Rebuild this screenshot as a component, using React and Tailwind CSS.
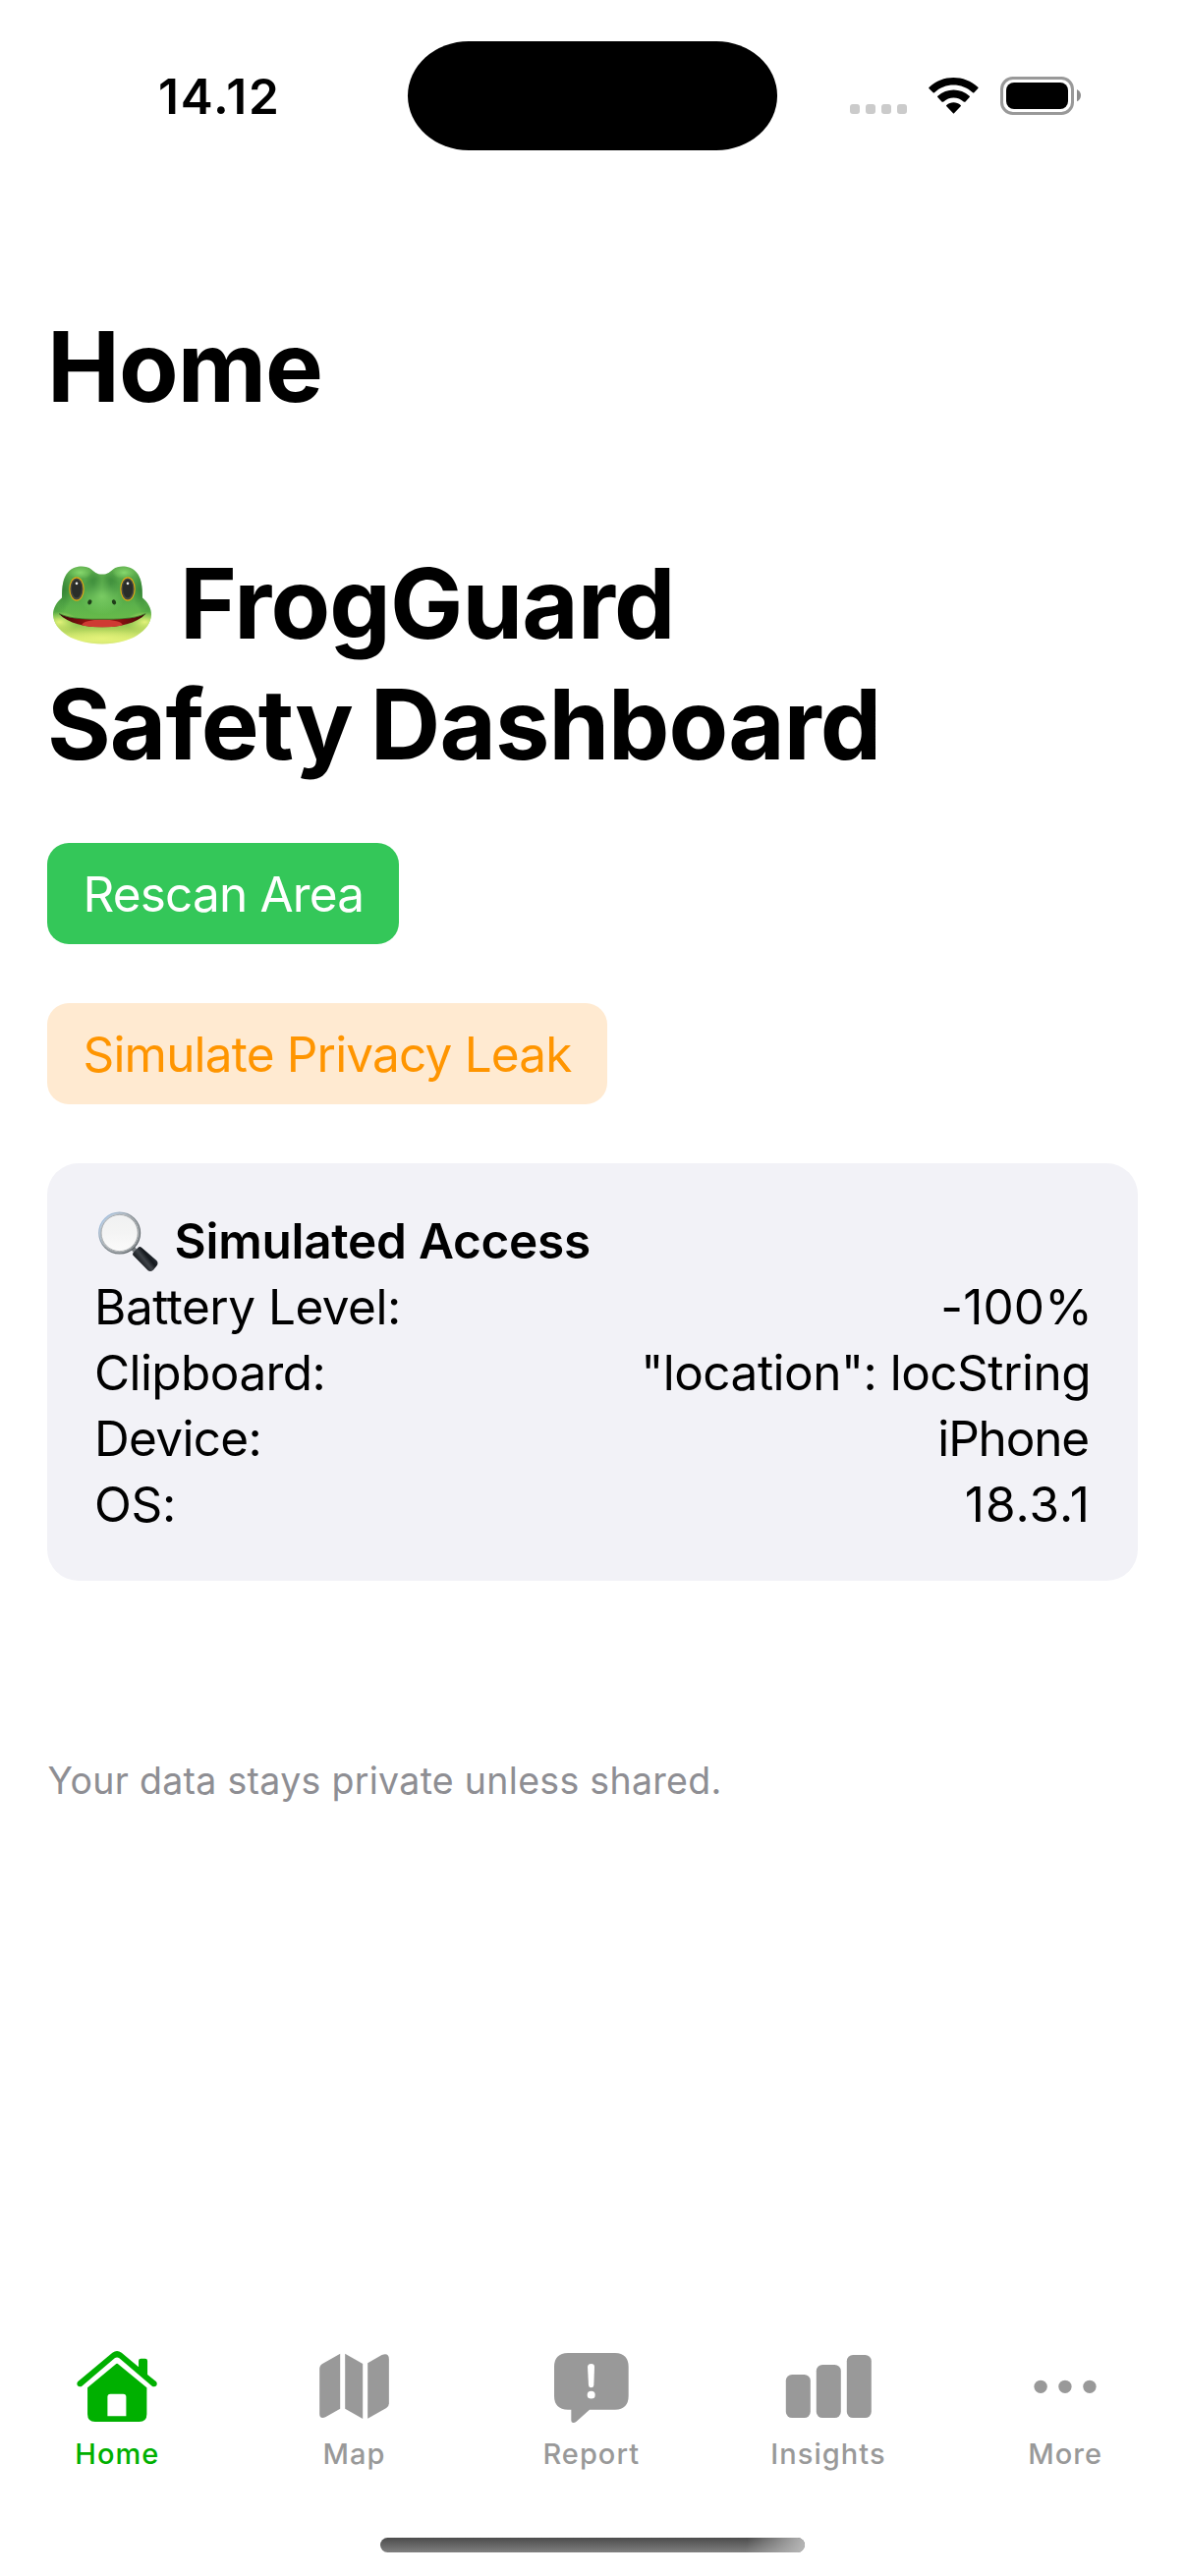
import React from "react";

function SignalDots() {
  return (
    <svg viewBox="135 84 174 120" className="mt-[2px] h-[40px] w-[58px]" fill="#cbcbcb" aria-hidden="true">
      <rect x="135" y="168" width="30" height="30" rx="9" />
      <rect x="183" y="168" width="30" height="30" rx="9" />
      <rect x="231" y="168" width="30" height="30" rx="9" />
      <rect x="279" y="168" width="30" height="30" rx="9" />
    </svg>
  );
}

function WifiIcon() {
  return (
    <svg viewBox="372 84 156 120" className="mt-[2px] ml-[21px] h-[40px] w-[52px]" aria-hidden="true">
      <path d="M376 120 Q375 118 377 116 C418 77 484 77 526 116 Q528 118 526 120 L514 133 Q512 134 510 133 C476 102 426 102 393 133 Q391 134 389 133 Z" />
      <path d="M403 147 Q401 145 403 143 C431 118 472 118 500 143 Q502 145 500 147 L487 161 Q485 162 483 161 C465 144 438 144 420 161 Q418 162 416 161 Z" />
      <path d="M430 175 Q428 173 430 171 C442 160 461 160 473 171 Q475 173 473 175 L453 196 Q451.500 198 450 196 Z" />
    </svg>
  );
}

function BatteryIcon() {
  return (
    <svg viewBox="594 84 249 120" className="mt-[2px] ml-[22px] h-[40px] w-[83px]" aria-hidden="true">
      <rect x="598.500" y="88.500" width="216" height="108" rx="34" fill="none" stroke="#999" strokeWidth="9" />
      <rect x="612" y="102" width="189" height="81" rx="24" />
      <path d="M828 123 C836 127 840 134 840 141 C840 149 836 156 828 160 Z" fill="#8c8c8c" />
    </svg>
  );
}

function StatusBar() {
  return (
    <div className="flex h-[194px] items-center">
      <div className="mt-[2px] ml-[161px] w-[254px] text-[49.5px] leading-[60px] font-semibold tracking-[1.86px]">14.12</div>
      <div className="h-[111px] w-[376px] rounded-[62px/55.5px] bg-black" />
      <div className="ml-[74px] flex">
        <SignalDots />
        <WifiIcon />
        <BatteryIcon />
      </div>
    </div>
  );
}

function Frog() {
  const head =
    "M222 102 C240 102 246 94 256 86 C272 75 306 74 326 95 C342 112 345 140 345 174 C361 187 372 205 372 226 C369 275 310 315 222 315 C134 315 75 275 72 226 C72 205 83 187 99 174 C99 140 102 112 118 95 C138 74 172 75 188 86 C198 94 204 102 222 102 Z";
  return (
    <svg viewBox="54 7.500 405 369" className="h-[123px] w-[135px]" role="img" aria-label="Frog">
      <defs>
        <linearGradient id="skin" x1="0" y1="78" x2="0" y2="315" gradientUnits="userSpaceOnUse">
          <stop offset="0" stopColor="#62b250" />
          <stop offset="0.3" stopColor="#4a9c42" />
          <stop offset="0.5" stopColor="#5cb24b" />
          <stop offset="0.66" stopColor="#66ba4a" />
          <stop offset="0.8" stopColor="#a9cf58" />
          <stop offset="0.95" stopColor="#e4f37c" />
          <stop offset="1" stopColor="#d3e47b" />
        </linearGradient>
        <radialGradient id="bump" cx="0.5" cy="0.5" r="0.5">
          <stop offset="0" stopColor="#86d76c" />
          <stop offset="1" stopColor="#86d76c" stopOpacity="0" />
        </radialGradient>
        <radialGradient id="shade" cx="0.5" cy="0.5" r="0.5">
          <stop offset="0" stopColor="#27752e" stopOpacity="0.6" />
          <stop offset="1" stopColor="#27752e" stopOpacity="0" />
        </radialGradient>
        <radialGradient id="jaw" cx="0.5" cy="0.5" r="0.5">
          <stop offset="0" stopColor="#e4f27a" />
          <stop offset="1" stopColor="#d5ea6c" stopOpacity="0" />
        </radialGradient>
        <linearGradient id="mouth" x1="92" y1="0" x2="354" y2="0" gradientUnits="userSpaceOnUse">
          <stop offset="0" stopColor="#3a0a08" />
          <stop offset="0.3" stopColor="#8d1010" />
          <stop offset="0.7" stopColor="#8d1010" />
          <stop offset="1" stopColor="#3a0a08" />
        </linearGradient>
        <clipPath id="headClip">
          <path d={head} />
        </clipPath>
        <clipPath id="mouthClip">
          <path d="M90 223 C130 241 174 240 222 240 C270 240 314 241 355 223 C328 253 272 264 222 264 C172 264 118 253 90 223 Z" />
        </clipPath>
      </defs>
      <path d={head} fill="url(#skin)" />
      <g clipPath="url(#headClip)">
        <ellipse cx="104" cy="150" rx="26" ry="62" fill="url(#shade)" />
        <ellipse cx="341" cy="150" rx="26" ry="62" fill="url(#shade)" />
        <ellipse cx="196" cy="132" rx="26" ry="46" fill="url(#shade)" />
        <ellipse cx="248" cy="132" rx="26" ry="46" fill="url(#shade)" />
        <ellipse cx="155" cy="97" rx="36" ry="20" fill="url(#bump)" />
        <ellipse cx="289" cy="97" rx="36" ry="20" fill="url(#bump)" />
        <ellipse cx="222" cy="170" rx="70" ry="56" fill="url(#bump)" opacity="0.75" />
        <ellipse cx="82" cy="206" rx="30" ry="34" fill="url(#shade)" opacity="0.5" />
        <ellipse cx="362" cy="206" rx="30" ry="34" fill="url(#shade)" opacity="0.5" />
        <ellipse cx="92" cy="248" rx="56" ry="32" fill="url(#jaw)" />
        <ellipse cx="352" cy="248" rx="56" ry="32" fill="url(#jaw)" />
        <ellipse cx="222" cy="298" rx="130" ry="28" fill="url(#jaw)" />
      </g>
      <g clipPath="url(#mouthClip)">
        <rect x="90" y="220" width="266" height="46" fill="url(#mouth)" />
        <ellipse cx="222" cy="257" rx="62" ry="17" fill="#cf3a33" />
      </g>
      <path d="M90 222 C130 240 174 239 222 239 C270 239 314 240 355 222" fill="none" stroke="#2c6423" strokeWidth="2" />
      <g>
        <ellipse cx="144" cy="147" rx="21.500" ry="35" fill="#454942" stroke="#e3ad14" strokeWidth="3.500" />
        <ellipse cx="144" cy="146" rx="15" ry="28" fill="#2a2d29" />
        <circle cx="144" cy="130" r="4" fill="#f2f2f2" />
        <ellipse cx="300" cy="147" rx="21.500" ry="35" fill="#454942" stroke="#e3ad14" strokeWidth="3.500" />
        <ellipse cx="300" cy="146" rx="15" ry="28" fill="#2a2d29" />
        <circle cx="300" cy="130" r="4" fill="#f2f2f2" />
      </g>
      <ellipse cx="184" cy="187" rx="6" ry="8" fill="#1f3d19" transform="rotate(25 184 187)" />
      <ellipse cx="258" cy="187" rx="6" ry="8" fill="#1f3d19" transform="rotate(-25 258 187)" />
    </svg>
  );
}

function Magnifier() {
  return (
    <svg viewBox="48 36 244.500 183" className="h-[61px] w-[81.5px] overflow-visible" role="img" aria-label="Magnifying glass">
      <defs>
        <linearGradient id="rim" x1="70" y1="50" x2="185" y2="150" gradientUnits="userSpaceOnUse">
          <stop offset="0" stopColor="#a9c8ea" />
          <stop offset="0.45" stopColor="#8b9297" />
          <stop offset="1" stopColor="#50565a" />
        </linearGradient>
        <linearGradient id="glass" x1="0" y1="45" x2="0" y2="160" gradientUnits="userSpaceOnUse">
          <stop offset="0" stopColor="#f0f1f2" />
          <stop offset="0.5" stopColor="#f4f4f4" />
          <stop offset="1" stopColor="#fbfbfb" />
        </linearGradient>
        <linearGradient id="grip" x1="178" y1="195" x2="222" y2="160" gradientUnits="userSpaceOnUse">
          <stop offset="0" stopColor="#0b0e12" />
          <stop offset="0.45" stopColor="#3e4248" />
          <stop offset="0.7" stopColor="#14181d" />
          <stop offset="1" stopColor="#2a3138" />
        </linearGradient>
      </defs>
      <path d="M160 142 L174 158" stroke="#777c80" strokeWidth="14" />
      <path d="M182 146 Q187 142 192 146 L238 186 Q244 192 240 200 L228 215 Q220 222 212 217 L168 172 Q163 167 167 162 Z" fill="url(#grip)" />
      <circle cx="125" cy="102" r="61" fill="url(#glass)" stroke="url(#rim)" strokeWidth="7" />
      <circle cx="125" cy="102" r="60" fill="none" stroke="#dfe5e9" strokeWidth="2" opacity="0.8" />
      <circle cx="125" cy="102" r="56" fill="none" stroke="#63686b" strokeWidth="2" opacity="0.8" />
    </svg>
  );
}

function HomeIcon() {
  return (
    <svg viewBox="121.800 54 300 240" className="h-[80px] w-[100px]" fill="currentColor" aria-hidden="true">
      <path d="M146 163 L252 74 Q266 64 280 74 L332 118 L332 99 Q332 92 339 92 L352 92 Q359 92 359 99 L359 141 L386 163 Q390 168 387 174 Q382 180 374 177 L273 91 Q266 86 259 91 L158 177 Q150 180 145 174 Q142 168 146 163 Z" />
      <path fillRule="evenodd" d="M261 110 Q266 105 271 110 L357 181 L357 262 Q357 285 334 285 L199 285 Q176 285 176 262 L176 181 Z M246 200 Q237 200 237 209 L237 268 L294 268 L294 209 Q294 200 285 200 Z" />
    </svg>
  );
}

function MapIcon() {
  return (
    <svg viewBox="845.400 54 300 240" className="h-[80px] w-[100px]" fill="currentColor" aria-hidden="true">
      <path d="M948 77 L948 245 L903 271 Q885 277 885 261 L885 123 Q885 112 895 107 Z" />
      <path d="M963 77 L1017 108 L1017 276 L963 245 Z" />
      <path d="M1032 106 L1075 81 Q1097 73 1097 94 L1097 229 Q1097 238 1089 243 L1032 275 Z" />
    </svg>
  );
}

function ReportIcon() {
  return (
    <svg viewBox="69 54 300 240" className="h-[80px] w-[100px]" fill="currentColor" aria-hidden="true">
      <path d="M144 75 H288 Q329 77 329 117 V206 Q329 246 288 248 H210 L169 285 Q164 289 159 288 Q154 287 154 281 V248 H144 Q102 246 102 206 V117 Q102 77 144 75 Z" />
      <path d="M204 117 Q205 108 215 108 Q225 108 225 117 L223 174 Q222 181 215 181 Q208 181 207 174 Z" fill="#fff" />
      <ellipse cx="215" cy="203" rx="12" ry="11.500" fill="#fff" />
    </svg>
  );
}

function InsightsIcon() {
  return (
    <svg viewBox="792.600 54 300 240" className="h-[80px] w-[100px]" fill="currentColor" aria-hidden="true">
      <rect x="810" y="141" width="75" height="132" rx="19" />
      <rect x="903" y="111" width="75" height="162" rx="19" />
      <rect x="996" y="81" width="75" height="192" rx="19" />
    </svg>
  );
}

function MoreIcon() {
  return (
    <svg viewBox="406.200 54 300 240" className="h-[80px] w-[100px]" fill="currentColor" aria-hidden="true">
      <circle cx="478.500" cy="178" r="20" />
      <circle cx="553" cy="178" r="20" />
      <circle cx="628" cy="178" r="20" />
    </svg>
  );
}

const rows = [
  { label: "Battery Level:", value: "-100%", labelClass: "tracking-[-0.5px]", valueClass: "-mr-[2px] tracking-[0.16px]" },
  { label: "Clipboard:", value: '"location": locString', labelClass: "tracking-[-0.59px]", valueClass: "tracking-[-0.51px]" },
  { label: "Device:", value: "iPhone", labelClass: "tracking-[-0.68px]", valueClass: "mr-[2px] tracking-[-1.16px]" },
  { label: "OS:", value: "18.3.1", labelClass: "tracking-[-0.3px]", valueClass: "tracking-[1px]" },
];

const tabs = [
  { label: "Home", Icon: HomeIcon, color: "text-[#00b000]" },
  { label: "Map", Icon: MapIcon, color: "text-[#999999]" },
  { label: "Report", Icon: ReportIcon, color: "text-[#999999]" },
  { label: "Insights", Icon: InsightsIcon, color: "text-[#999999]" },
  { label: "More", Icon: MoreIcon, color: "text-[#999999]" },
];

export default function App() {
  return (
    <div className="flex h-[2622px] w-[1206px] flex-col overflow-hidden bg-white font-['Inter',sans-serif] whitespace-nowrap text-black">
      <StatusBar />

      <main className="flex flex-col items-start px-[48px] pt-[117.5px]">
        <h1 className="text-[99px] leading-[123px] font-bold tracking-[-1.01px]">Home</h1>

        <h2 className="mt-[118px] text-[99px] leading-[123px] font-bold">
          <span className="flex tracking-[-0.83px]">
            <Frog />
            FrogGuard
          </span>
          <span className="block tracking-[-0.95px] [word-spacing:-4.5px]">Safety Dashboard</span>
        </h2>

        <button className="mt-[59.5px] flex h-[103px] w-[358px] items-center rounded-[22px] bg-[#34c759] pt-[1px] pl-[36.5px] text-[49.5px] leading-[61px] tracking-[-0.85px] text-white">
          Rescan Area
        </button>
        <button className="mt-[60px] flex h-[103px] w-[570px] items-center rounded-[22px] bg-[#ffead1] pt-[1px] pl-[36.5px] text-[49.5px] leading-[61px] tracking-[-0.82px] text-[#ff9500]">
          Simulate Privacy Leak
        </button>

        <section className="mt-[60px] flex w-full flex-col gap-[6px] rounded-[32px] bg-[#f2f2f7] px-[48px] pt-[49px] pb-[47px] text-[49.5px] leading-[61px]">
          <h3 className="flex font-semibold tracking-[-0.26px]">
            <Magnifier />
            Simulated Access
          </h3>
          {rows.map((r) => (
            <div key={r.label} className="flex justify-between">
              <span className={r.labelClass}>{r.label}</span>
              <span className={r.valueClass}>{r.value}</span>
            </div>
          ))}
        </section>

        <p className="mt-[180px] pl-[0.5px] text-[37.5px] leading-[48px] tracking-[0.3px] text-[#8e8e93]">
          Your data stays private unless shared.
        </p>
      </main>

      <nav className="mt-auto grid grid-cols-5">
        {tabs.map(({ label, Icon, color }) => (
          <div key={label} className={`flex flex-col items-center ${color}`}>
            <Icon />
            <span className="mt-[11.5px] mr-[2.5px] text-[29px] leading-[36px] font-medium tracking-[1.04px]">{label}</span>
          </div>
        ))}
      </nav>

      <div className="mt-[67.5px] mb-[24px] flex h-[15px] justify-center">
        <div className="h-[15px] w-[432px] overflow-hidden rounded-full bg-linear-to-b from-[#4c4c4c] to-[#808080]">
          <div className="h-full w-full bg-[linear-gradient(100deg,transparent_86%,#b8b8b8_100%)]" />
        </div>
      </div>
    </div>
  );
}
